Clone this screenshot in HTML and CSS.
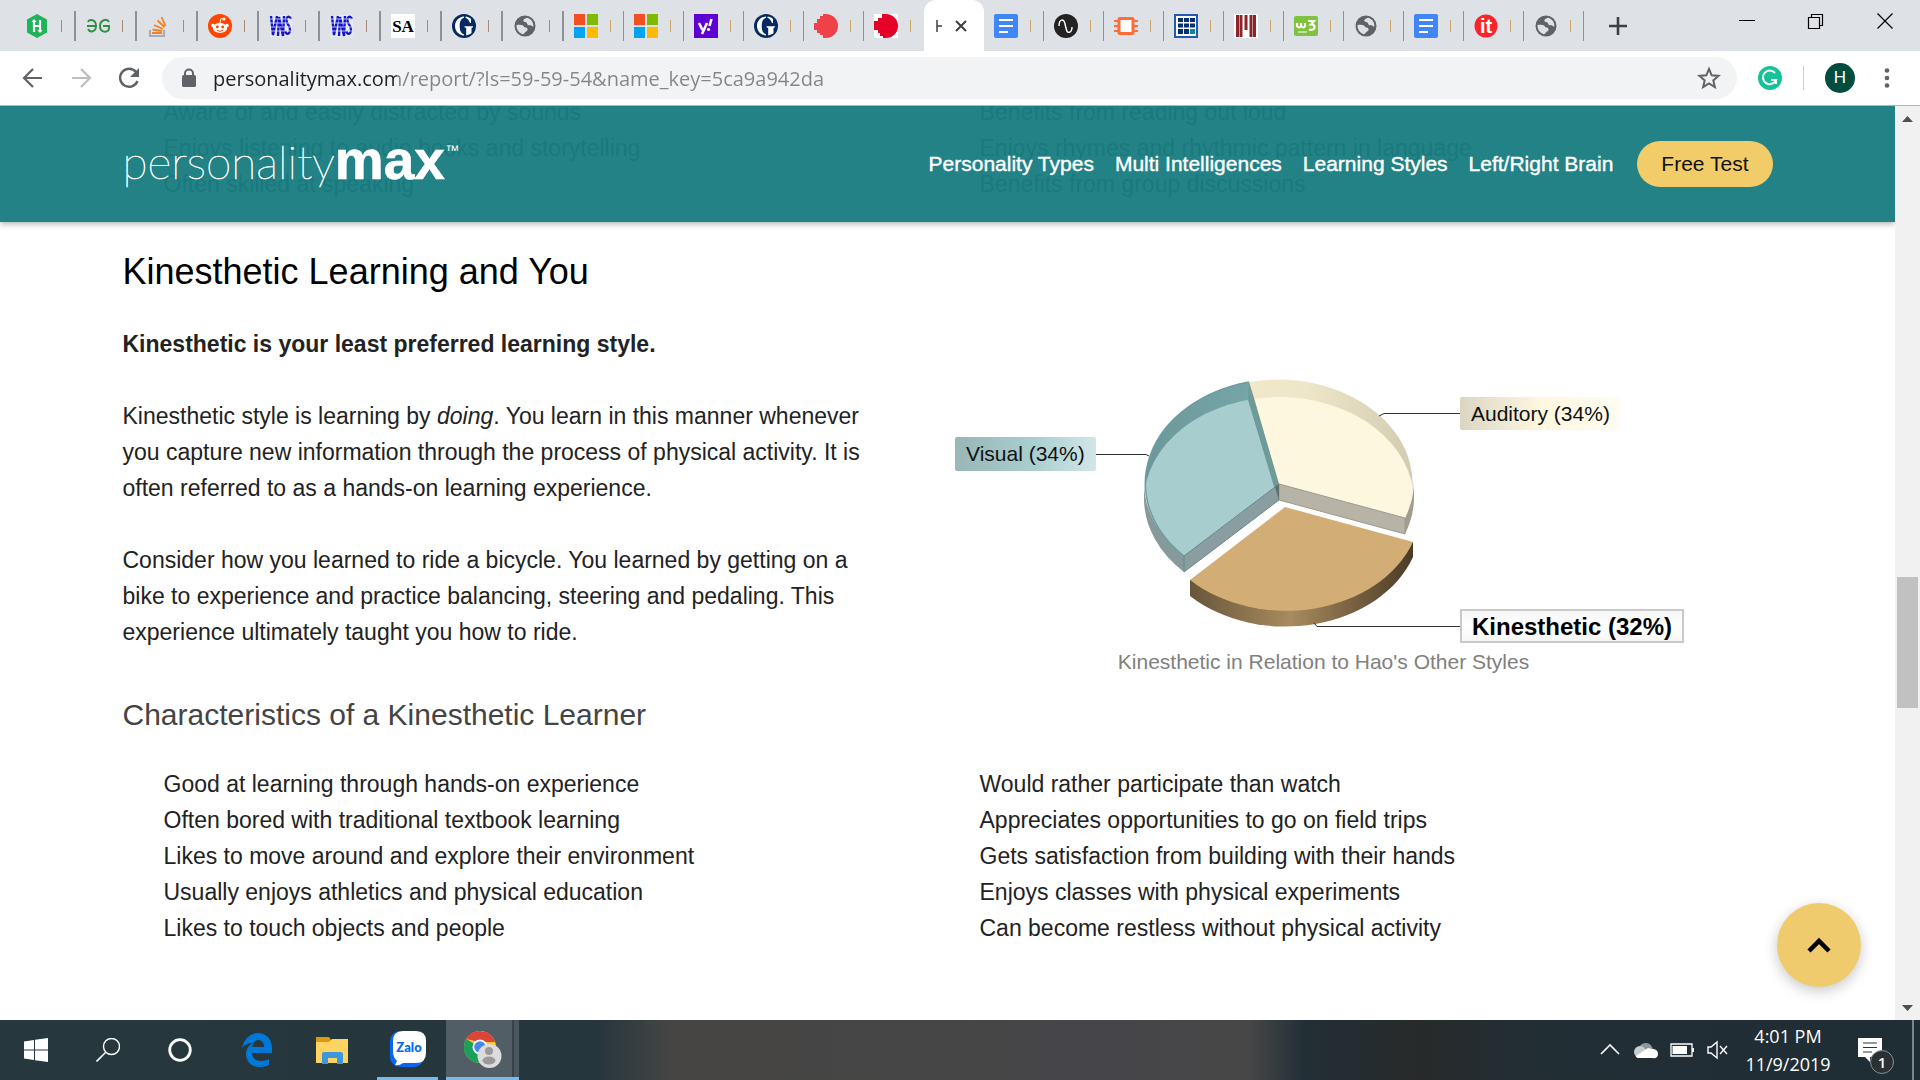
FILE: index.html
```html
<!DOCTYPE html>
<html lang="en">
<head>
<meta charset="utf-8">
<title>Kinesthetic Learning and You</title>
<link rel="stylesheet" href="styles.css">
</head>
<body>
<svg class="defs" aria-hidden="true">
  <symbol id="globe" viewBox="0 0 24 24"><circle cx="12" cy="12" r="10.500" fill="#5f6368"/><path fill="#dee1e6" d="M3.500 11c2.500-.5 5-.5 6.500.5 1 .7 1 2 2.500 2 1.500.3 2.300 1.200 2 2.500-.5 1.700-2.500 1.500-3 3-.3 1-1.500 1.500-3 .8C5 18 3.300 15 3.500 11z"/><path fill="#dee1e6" d="M14 3.800c-1.500.7-3.500 1-3.700 2.700-.1 1.300 1.500 1.500 2.700 1.800 1.200.4.800 2 2 2.700 1.300.7 2.500-.3 3.500.7.700.8 1.200 1 1.900.5C20.500 8 18 5 14 3.800z"/></symbol>
  <symbol id="ms" viewBox="0 0 24 24"><path fill="#f25022" d="M0 0h11v11H0z"/><path fill="#7fba00" d="M13 0h11v11H13z"/><path fill="#00a4ef" d="M0 13h11v11H0z"/><path fill="#ffb900" d="M13 13h11v11H13z"/></symbol>
  <symbol id="vns" viewBox="0 0 24 24"><path fill="#e8eaf0" d="M1 1h22v22H1z"/><path fill="none" stroke="#1414c8" stroke-width="2.400" d="M2 2l2 19L8 2M9 22l1-19 4 19 1-20M22 5c-2-4-5-2-4.500 2s4 5 3.500 9c-.5 5-4 5-4.500 1"/><path stroke="#e8eaf0" stroke-width=".8" d="M1 5h22M1 9h22M1 13h22M1 17h22"/></symbol>
  <symbol id="guard" viewBox="0 0 24 24"><circle cx="12" cy="12" r="12" fill="#052962"/><path fill="#fff" d="M12 2.500C6.500 3 3 7 3 12s3.500 9 9 9.500v-1.200C9 19.500 7.700 16.500 7.700 12S9 4.500 12 3.700zM13.500 2.500c2 .2 4 1 5.500 2.200V9h-1c-1-2.700-2.500-4.700-4.500-5.300zM12.500 12.300H21v1l-1.500.7v5c-1.500 1.300-3.500 2.200-5.300 2.400V14l-1.700-.7z"/></symbol>
  <symbol id="docs" viewBox="0 0 24 24"><rect width="24" height="24" rx="2" fill="#4285f4"/><path stroke="#fff" stroke-width="2.200" d="M5 6h14M5 12h14M5 18h9"/></symbol>
</svg>

<header class="tabstrip">
  <div class="tabs">
    <button class="tab wide" aria-label="H"><svg viewBox="0 0 24 24"><path fill="#1fb35a" d="M12 0l10 5.500v13L12 24 2 18.500v-13z"/><path stroke="#fff" stroke-width="2.200" fill="none" d="M9 6v12M15 6v12M9 12h6"/><path fill="#fff" d="M6.500 8h5L9 5zM12.500 16h5L15 19z"/></svg><i></i></button>
    <button class="tab wide" aria-label="GeeksforGeeks"><svg viewBox="0 0 24 24"><path fill="none" stroke="#2f8d46" stroke-width="1.900" d="M1 12h10M2 8c1-3 8-3 8 4 0 6-6 7-8 3M23 8c-2-4-9-2-9 4 0 7 8 7 9 3v-3h-6"/></svg><i></i></button>
    <button class="tab wide" aria-label="Stack Overflow"><svg viewBox="0 0 24 24"><path fill="none" stroke="#a9adb2" stroke-width="2.200" d="M3 16v6h14v-6"/><path fill="none" stroke="#f48024" stroke-width="1.800" d="M5 19h10M5.500 15.500l9.500 1.500M7 11l9 4M10.500 6.500l7 6.500M14.500 3l4 9"/></svg><i></i></button>
    <button class="tab wide" aria-label="Reddit"><svg viewBox="0 0 24 24"><circle cx="12" cy="12" r="12" fill="#ff4500"/><ellipse cx="12" cy="14" rx="7.200" ry="5" fill="#fff"/><circle cx="5" cy="11.500" r="1.800" fill="#fff"/><circle cx="19" cy="11.500" r="1.800" fill="#fff"/><circle cx="16" cy="5" r="1.500" fill="#fff"/><path d="M12 9l1-4.500 3 .7" fill="none" stroke="#fff"/><path d="M9 16.300q3 2 6 0" fill="none" stroke="#ff4500"/><circle cx="9.300" cy="13" r="1.400" fill="#ff4500"/><circle cx="14.700" cy="13" r="1.400" fill="#ff4500"/></svg><i></i></button>
    <button class="tab wide" aria-label="VNS"><svg><use href="#vns"/></svg><i></i></button>
    <button class="tab wide" aria-label="VNS"><svg><use href="#vns"/></svg><i></i></button>
    <button class="tab wide" aria-label="SA"><svg viewBox="0 0 24 24"><path fill="#fff" d="M0 0h24v24H0z"/><text x="12" y="18" text-anchor="middle" class="fav-serif">SA</text></svg><i></i></button>
    <button class="tab wide" aria-label="The Guardian"><svg><use href="#guard"/></svg><i></i></button>
    <button class="tab wide" aria-label="Page"><svg><use href="#globe"/></svg><i></i></button>
    <button class="tab" aria-label="Microsoft"><svg><use href="#ms"/></svg><i></i></button>
    <button class="tab" aria-label="Microsoft"><svg><use href="#ms"/></svg><i></i></button>
    <button class="tab" aria-label="Yahoo"><svg viewBox="0 0 24 24"><path fill="#5f01d1" d="M0 0h24v24H0z"/><path fill="none" stroke="#fff" stroke-width="2.600" d="M5 9l3.500 7M13 9L8 20M17.500 5l-2 7"/><circle cx="14.500" cy="15.500" r="1.600" fill="#fff"/></svg><i></i></button>
    <button class="tab" aria-label="The Guardian"><svg><use href="#guard"/></svg><i></i></button>
    <button class="tab" aria-label="Page"><svg viewBox="0 0 24 24"><path fill="#f04048" d="M12 0a12 12 0 0 1 0 24H9v-3H6v-2H3v-3H0V9h3V5h3V2h3V0z"/></svg><i></i></button>
    <button class="tab last" aria-label="Page"><svg viewBox="0 0 24 24"><path fill="#fff" d="M0 0h24v24H0z"/><path fill="#e60028" d="M12 0a12 12 0 0 1 0 24H9v-2H6v-3H4v-3H0V7h4V4h4V0z"/></svg><i></i></button>
    <button class="tab active" aria-label="Close current tab"><svg viewBox="0 0 36 24"><path fill="none" stroke="#3c4043" stroke-width="1.500" d="M1 6v12M1 12h5"/><path fill="none" stroke="#3c4043" stroke-width="2" d="M20 7l10 10M30 7L20 17"/></svg></button>
    <button class="tab" aria-label="Docs"><svg><use href="#docs"/></svg><i></i></button>
    <button class="tab" aria-label="Wave"><svg viewBox="0 0 24 24"><circle cx="12" cy="12" r="12" fill="#222"/><path fill="none" stroke="#fff" stroke-width="1.400" d="M5 12c0-7 5-8 6-2l1.500 6c1 4 5.500 3 5.500-3"/></svg><i></i></button>
    <button class="tab" aria-label="Circuit"><svg viewBox="0 0 24 24"><path fill="none" stroke="#ff6c37" stroke-width="2" d="M0 7h4M0 12h4M0 17h4M20 7h4M20 12h4M20 17h4"/><rect x="5" y="4.500" width="14" height="15" rx="1" fill="#fff" stroke="#ff6c37" stroke-width="3"/></svg><i></i></button>
    <button class="tab" aria-label="Grid"><svg viewBox="0 0 24 24"><path fill="#fff" stroke="#2458b3" stroke-width="2" d="M1 1h22v22H1z"/><path fill="#003070" d="M4 4h5v4H4zM10 4h5v4h-5zM16 4h5v4h-5zM4 9.500h5v4H4zM10 9.500h5v4h-5zM16 9.500h5v4h-5zM4 15h5v5H4zM10 15h5v5h-5z"/><path fill="#008e8e" d="M16 15h5v5h-5z"/></svg><i></i></button>
    <button class="tab" aria-label="M"><svg viewBox="0 0 24 24"><path fill="#fff" d="M0 0h24v24H0z"/><path stroke="#8b2529" stroke-width="3" d="M3.500 1v22M7 1v22M12 1v15M17 1v22M20.500 1v22"/></svg><i></i></button>
    <button class="tab" aria-label="W3Schools"><svg viewBox="0 0 24 24"><rect y="2" width="24" height="20" rx="2" fill="#80c23e"/><path fill="none" stroke="#fff" stroke-width="2.200" d="M3 9v3q2 3 4 0V9v3q3 3 4 0V9M14 7h6l-3 3.500c6 0 4 7-2 5"/><path stroke="#fff" d="M4 18h9"/></svg><i></i></button>
    <button class="tab" aria-label="Page"><svg><use href="#globe"/></svg><i></i></button>
    <button class="tab" aria-label="Docs"><svg><use href="#docs"/></svg><i></i></button>
    <button class="tab" aria-label="it"><svg viewBox="0 0 24 24"><circle cx="12" cy="12" r="11.500" fill="#f8262a"/><text x="12" y="19" text-anchor="middle" class="fav-it">it</text></svg><i></i></button>
    <button class="tab" aria-label="Page"><svg><use href="#globe"/></svg><i></i></button>
  </div>
  <button class="newtab" aria-label="New tab"><svg viewBox="0 0 24 24"><path stroke="#3c4043" stroke-width="2.600" d="M12 3v18M3 12h18"/></svg></button>
  <div class="wincontrols">
    <button aria-label="Minimize"><svg viewBox="0 0 24 24"><path stroke="#000" d="M4 11.500h16"/></svg></button>
    <button aria-label="Restore"><svg viewBox="0 0 24 24"><path fill="none" stroke="#000" stroke-width="1.200" d="M4.500 8.500h11v11h-11zM7.500 8V5.500h11v11H16"/></svg></button>
    <button aria-label="Close"><svg viewBox="0 0 24 24"><path stroke="#000" stroke-width="1.200" d="M4.500 4.500l15 15M19.500 4.500l-15 15"/></svg></button>
  </div>
</header>

<div class="toolbar">
  <div class="history">
    <button aria-label="Back"><svg viewBox="0 0 24 24"><path fill="none" stroke="#5f6368" stroke-width="2.200" d="M21 12H4M12 3l-9 9 9 9"/></svg></button>
    <button aria-label="Forward"><svg viewBox="0 0 24 24"><path fill="none" stroke="#bcbec1" stroke-width="2.200" d="M3 12h17M12 3l9 9-9 9"/></svg></button>
    <button aria-label="Reload"><svg viewBox="0 0 24 24"><path fill="none" stroke="#5f6368" stroke-width="2.400" d="M19 6A9 9 0 1 0 20.500 15"/><path fill="#5f6368" d="M22 2v9h-9z"/></svg></button>
  </div>
  <div class="omnibox">
    <svg viewBox="0 0 16 20"><path fill="none" stroke="#5f6368" stroke-width="2" d="M4 9V5.500a4 4 0 0 1 8 0V9"/><rect x="1" y="7" width="14" height="12" rx="1.500" fill="#5f6368"/></svg>
    <input class="url" type="text" aria-label="Address" value="personalitymax.com/report/?ls=59-59-54&amp;name_key=5ca9a942da">
    <button aria-label="Bookmark"><svg viewBox="0 0 24 24"><path fill="none" stroke="#5f6368" stroke-width="2" d="M12 3l2.700 6.300 6.800.6-5.200 4.500 1.600 6.700-5.900-3.600-5.900 3.600 1.600-6.700L2.500 9.900l6.800-.6z"/></svg></button>
  </div>
  <button aria-label="Grammarly"><svg viewBox="0 0 24 24"><circle cx="12" cy="12" r="12" fill="#15c39a"/><path fill="none" stroke="#fff" stroke-width="2" d="M17 7a6.800 6.800 0 1 0 1 7h-5M18 13.500V18"/></svg></button>
  <span class="divider"></span>
  <button class="avatar">H</button>
  <button class="menu" aria-label="Menu"><svg viewBox="0 0 12 24"><g fill="#5f6368"><circle cx="6" cy="4.500" r="2.300"/><circle cx="6" cy="12" r="2.300"/><circle cx="6" cy="19.500" r="2.300"/></g></svg></button>
</div>

<div class="viewport">
  <div class="page">
    <nav class="sitebar" aria-label="Site">
      <div class="container sitebar-row">
        <a href="#" class="logo">personality<b>max</b><sup>™</sup></a>
        <div class="links">
          <a href="#">Personality Types</a>
          <a href="#">Multi Intelligences</a>
          <a href="#">Learning Styles</a>
          <a href="#">Left/Right Brain</a>
          <button class="cta">Free Test</button>
        </div>
      </div>
    </nav>

    <main class="container">
      <div class="columns previous">
        <ul>
          <li>Aware of and easily distracted by sounds</li>
          <li>Enjoys listening to audio books and storytelling</li>
          <li>Often skilled at speaking</li>
        </ul>
        <ul>
          <li>Benefits from reading out loud</li>
          <li>Enjoys rhymes and rhythmic pattern in language</li>
          <li>Benefits from group discussions</li>
        </ul>
      </div>
      <h2>Kinesthetic Learning and You</h2>
      <div class="columns">
        <div class="copy">
          <p><strong>Kinesthetic is your least preferred learning style.</strong></p>
          <p>Kinesthetic style is learning by <em>doing</em>. You learn in this manner whenever you capture new information through the process of physical activity. It is often referred to as a hands-on learning experience.</p>
          <p>Consider how you learned to ride a bicycle. You learned by getting on a bike to experience and practice balancing, steering and pedaling. This experience ultimately taught you how to ride.</p>
        </div>
        <figure>
          <svg class="pie" viewBox="939 326 770 318" role="img" aria-label="Pie chart of learning styles">
            <defs>
              <linearGradient id="gk"><stop offset="0" stop-color="#68563a"/><stop offset=".45" stop-color="#a88b5e"/><stop offset=".62" stop-color="#8b714c"/><stop offset="1" stop-color="#4a3b26"/></linearGradient>
              <linearGradient id="gv"><stop offset="0" stop-color="#9ab6b6"/><stop offset=".55" stop-color="#a8cece"/><stop offset="1" stop-color="#d3e6e7"/></linearGradient>
              <linearGradient id="ga"><stop offset="0" stop-color="#dbd6c4"/><stop offset=".5" stop-color="#fef7df"/><stop offset="1" stop-color="#fffcf2"/></linearGradient>
              <linearGradient id="ca"><stop offset="0" stop-color="#f1e8ca"/><stop offset=".35" stop-color="#eee6c8"/><stop offset="1" stop-color="#d2ccb0"/></linearGradient>
              <linearGradient id="cv"><stop offset="0" stop-color="#6c989b"/><stop offset="1" stop-color="#78a9ac"/></linearGradient>
              <linearGradient id="gb" x2="0" y2="1"><stop offset="0" stop-color="#f6f6f6"/><stop offset=".5" stop-color="#fff"/><stop offset="1" stop-color="#f6f6f6"/></linearGradient>
              <clipPath id="lower"><ellipse cx="1279" cy="501" rx="135" ry="104"/></clipPath>
            </defs>
            <path fill="#869a9a" d="M1144 480A135 104 0 0 0 1184 556V572A135 104 0 0 1 1144 500z"/>
            <path fill="#a09d90" d="M1414 480A135 104 0 0 1 1405 518V534A135 104 0 0 0 1414 500z"/>
            <path fill="url(#cv)" d="M1279 484L1249 382A135 104 0 0 0 1184 556z"/>
            <path fill="url(#ca)" d="M1279 484L1249 382A135 104 0 0 1 1405 518z"/>
            <g clip-path="url(#lower)">
              <path fill="#a8cdce" d="M1279 484L1249 382A135 104 0 0 0 1184 556z"/>
              <path fill="#fef7df" d="M1279 484L1249 382A135 104 0 0 1 1405 518z"/>
            </g>
            <path fill="none" stroke="#6f9c9d" stroke-width="1.500" d="M1249 382A135 104 0 0 0 1184 556"/>
            <path fill="#709a98" d="M1249 382L1254 398 1279 484 1275 490 1248 400z"/>
            <path fill="#8a9da0" stroke="#6a8888" stroke-width="1" d="M1184 556L1279 484V500L1184 572z"/>
            <path fill="#b7b4a7" stroke="#9d9a8c" stroke-width="1" d="M1279 484L1405 518V534L1279 500z"/>
            <path fill="#5c706f" d="M1275 487L1279 484V500z"/>
            <path fill="url(#gk)" d="M1190 580V596A135 104 0 0 0 1413 557V542z"/>
            <path fill="#d2ae76" d="M1285 507L1413 542A135 104 0 0 1 1190 580z"/>
            <g fill="none" stroke="#333" stroke-width="1"><path d="M1096 454.500H1146L1149 456"/><path d="M1379 416L1384 413.500H1460"/><path d="M1314 623L1317 626.500H1460"/></g>
            <rect x="955" y="437" width="141" height="34" rx="2" fill="url(#gv)"/>
            <rect x="1460" y="397" width="160" height="33" rx="2" fill="url(#ga)"/>
            <rect x="1461" y="610" width="222" height="32" fill="url(#gb)" stroke="#c9c9c9" stroke-width="2"/>
            <g class="pie-label"><text x="966" y="461">Visual (34%)</text><text x="1471" y="421">Auditory (34%)</text></g>
            <text class="pie-label-big" x="1472" y="635">Kinesthetic (32%)</text>
          </svg>
          <figcaption>Kinesthetic in Relation to Hao's Other Styles</figcaption>
        </figure>
      </div>
      <h3>Characteristics of a Kinesthetic Learner</h3>
      <div class="columns">
        <ul>
          <li>Good at learning through hands-on experience</li>
          <li>Often bored with traditional textbook learning</li>
          <li>Likes to move around and explore their environment</li>
          <li>Usually enjoys athletics and physical education</li>
          <li>Likes to touch objects and people</li>
        </ul>
        <ul>
          <li>Would rather participate than watch</li>
          <li>Appreciates opportunities to go on field trips</li>
          <li>Gets satisfaction from building with their hands</li>
          <li>Enjoys classes with physical experiments</li>
          <li>Can become restless without physical activity</li>
        </ul>
      </div>
    </main>
    <button class="totop" aria-label="Back to top"><svg viewBox="0 0 24 24"><path fill="none" stroke="#000" stroke-width="4.500" d="M2 18l10-10 10 10"/></svg></button>
  </div>
  <div class="scrollbar">
    <svg viewBox="0 0 25 25"><path fill="#505050" d="M7 16h11l-5.500-6z"/></svg>
    <div class="track-above"></div>
    <div class="thumb"></div>
    <div class="track-below"></div>
    <svg viewBox="0 0 25 25"><path fill="#505050" d="M7 10h11l-5.500 6z"/></svg>
  </div>
</div>

<footer class="taskbar">
  <button aria-label="Start"><svg viewBox="0 0 24 24"><path fill="#fff" d="M0 3.500L10 2v9.500H0zM11 1.800L24 0v11.500H11zM0 12.500h10V22L0 20.500zM11 12.500h13V24l-13-1.800z"/></svg></button>
  <button aria-label="Search"><svg viewBox="0 0 24 24"><circle cx="15.500" cy="8.500" r="8" fill="none" stroke="#fff" stroke-width="1.400"/><path stroke="#fff" stroke-width="1.600" d="M9.500 14.500L.5 23.500"/></svg></button>
  <button aria-label="Cortana"><svg viewBox="0 0 24 24"><circle cx="12" cy="12" r="10.300" fill="none" stroke="#fff" stroke-width="2.800"/></svg></button>
  <button class="app edge" aria-label="Edge"><svg viewBox="0 0 32 34"><path fill="#0078d7" d="M1 15C3 6 9 0 17 0c9 0 14 7 14 15v5H11c0 5 4 8 9 8 4 0 6-1 8-2v6c-3 1.500-6 2-10 2C10 34 5 28 5 21c0-5 3-9 7-11-5 0-9 2-11 5zm10-1h12c0-4-2-7-6-7-3 0-5 3-6 7z"/></svg></button>
  <button class="app" aria-label="File Explorer"><svg viewBox="0 0 32 34"><path fill="#dd9a0e" d="M0 4h13l2 3v4H0z"/><path fill="#fed460" d="M0 9l13 0 3-3h16v24H0z"/><path fill="#3e97de" d="M6 31V21q0-2 2-2h17q2 0 2 2v10h-6v-6h-9v6z"/></svg></button>
  <button class="app zalo" aria-label="Zalo"><svg viewBox="0 0 36 36"><rect width="34" height="36" rx="10" fill="#0866f5"/><path fill="#fff" d="M13 0h13q10 0 10 10v12q0 10-10 10H13q-4 3-8 2l2-4q-4-4-4-9V10Q3 0 13 0z"/><text x="19" y="21" text-anchor="middle" class="zalo-text">Zalo</text></svg></button>
  <button class="app chrome" aria-label="Chrome"><svg viewBox="0 0 38 38"><circle cx="16" cy="17" r="16" fill="#fcc934"/><path fill="#1aa05a" d="M16 17L2.100 9a16 16 0 0 0 13 24z"/><path fill="#db4437" d="M2.100 9a16 16 0 0 1 29 3H16z"/><circle cx="16" cy="17" r="7.500" fill="#fff"/><circle cx="16" cy="17" r="5.800" fill="#4a85ee"/><circle cx="25.500" cy="26" r="12" fill="#dcdcdc"/><circle cx="25" cy="21" r="4" fill="#9a9a9a"/><ellipse cx="25" cy="30.500" rx="6.500" ry="4" fill="#9a9a9a"/></svg></button>
  <div class="tray">
    <svg viewBox="0 0 24 24"><path fill="none" stroke="#fff" stroke-width="1.600" d="M3 16l9-9 9 9"/></svg>
    <svg viewBox="0 0 24 24"><path fill="#8d979b" d="M5 10a7 7 0 0 1 13-1l2 4H4z"/><circle cx="6" cy="14" r="6" fill="#c8cdcf"/><path fill="#fff" d="M2 18l12-8 4 1q6 0 6 5t-6 4H5q-3 0-3-2z"/></svg>
    <svg viewBox="0 0 24 24"><path fill="none" stroke="#fff" stroke-width="1.300" d="M1 6h21v12H1z"/><path fill="#fff" d="M2.500 8H17v8H2.500zM22 10h2v4h-2z"/></svg>
    <svg viewBox="0 0 24 24"><path fill="none" stroke="#fff" stroke-width="1.400" d="M2 9h3l6-5v16l-6-5H2zM14 8l7 8M21 8l-7 8"/></svg>
    <div class="clock"><span>4:01 PM</span><span>11/9/2019</span></div>
    <button class="notify" aria-label="Notifications"><svg viewBox="0 0 24 24"><path fill="#fff" d="M0 0h24v19H12v5l-5-5H0z"/><path stroke="#25363d" stroke-width="1.200" d="M5 5h14M5 9.500h14M5 14h9"/></svg><span class="count">1</span></button>
    <span class="desktop-edge"></span>
  </div>
</footer>
</body>
</html>
```
FILE: styles.css
```css
* { box-sizing: border-box; }
body {
  margin: 0;
  height: 100vh;
  display: flex;
  flex-direction: column;
  overflow: hidden;
  background: #fff;
  color: #222;
  font-family: "Liberation Sans", Arial, sans-serif;
}
button { border: 0; padding: 0; background: none; font: inherit; color: inherit; }
a { color: inherit; text-decoration: none; }
ul, h2, h3, p, figure { margin: 0; padding: 0; }
ul { list-style: none; }
svg { display: block; }
.defs { display: none; }

/* Tab strip */
.tabstrip { display: flex; flex: none; height: 51px; padding-left: 15px; background: #dee1e6; }
.tabs { display: flex; }
.tab { position: relative; display: flex; align-items: center; gap: 12px; width: 60px; padding-left: 10px; }
.tab.wide { width: 61px; }
.tab svg { width: 24px; height: 24px; flex: none; }
.tab i { width: 1px; height: 12px; background: #c9a36a; }
.tab::after { content: ""; width: 2px; height: 30px; margin-left: auto; background: #8e9196; }
.tab.wide i { background: #a58b78; }
.tab.active { background: #fff; border-radius: 12px 12px 0 0; padding-left: 12px; }
.tab.active svg { width: 36px; }
.tab.active::after, .tab.last::after { display: none; }
.newtab { width: 24px; margin-left: 22px; }
.newtab svg { width: 24px; height: 24px; }
.wincontrols { display: flex; align-items: center; gap: 45px; height: 42px; margin-left: auto; padding-right: 23px; }
.wincontrols svg { width: 24px; height: 24px; }
.fav-serif { font: bold 17px "Liberation Serif", serif; }
.fav-it { font: bold 20px "Liberation Sans", sans-serif; fill: #fff; }

/* Toolbar */
.toolbar { display: flex; flex: none; align-items: center; gap: 21px; height: 55px; padding: 0 27px 0 21px; border-bottom: 1px solid #b6b4b6; }
.toolbar svg { width: 24px; height: 24px; }
.history { display: flex; gap: 24px; }
.omnibox { display: flex; align-items: center; flex: 1; gap: 16px; height: 42px; padding: 0 16px 0 19px; border-radius: 21px; background: #f1f3f4; }
.omnibox > svg { width: 16px; height: 20px; }
.url {
  flex: 1;
  min-width: 0;
  border: 0;
  padding: 0;
  outline: 0;
  font: 20px "Open Sans", "Noto Sans", sans-serif;
  background: linear-gradient(90deg, #202124 184px, #80868b 184px);
  -webkit-background-clip: text;
  background-clip: text;
  color: transparent;
}
.divider { width: 1px; height: 24px; background: #ccc; }
.avatar { width: 30px; height: 30px; border-radius: 50%; background: #004d40; color: #fff; font-size: 17px; }
.menu { margin-left: 5px; }
.menu svg { width: 12px; }

/* Page viewport */
.viewport { display: flex; flex: 1; min-height: 0; }
.page { position: relative; flex: 1; min-width: 0; overflow: hidden; }
.container { max-width: 1650px; margin: 0 auto; }
.sitebar {
  position: absolute;
  inset: 0 0 auto 0;
  z-index: 1;
  background: rgba(25, 125, 129, 0.96);
  box-shadow: 0 2px 6px rgba(0, 0, 0, 0.3);
}
.sitebar-row { display: flex; align-items: center; justify-content: space-between; height: 116px; }
.logo { padding-bottom: 6px; color: #fff; font: 100 46px/60px Lato, sans-serif; -webkit-text-stroke: 0.6px #fff; }
.logo b { font: bold 55px/60px "Liberation Sans", sans-serif; }
.logo sup { font: 14px/14px "Liberation Sans", sans-serif; vertical-align: 24px; -webkit-text-stroke: 0; }
.links { display: flex; align-items: center; gap: 21px; color: #fff; font-size: 21px; }
.links a { -webkit-text-stroke: 0.4px #fff; }
.cta { height: 46px; padding: 0 24px; margin-left: 3px; border-radius: 23px; background: #f1cc68; color: #111; }

.columns { display: grid; grid-template-columns: 1fr 1fr; padding-right: 18px; font-size: 23px; line-height: 36px; }
.columns ul { padding-left: 41px; }
.previous { margin-top: -12px; }
h2 { margin: 48px 0 32px; color: #000; font-size: 36px; font-weight: 400; line-height: 44px; }
h3 { margin: 17px 0 33px; color: #444; font-size: 30px; font-weight: 400; line-height: 36px; }
.copy { display: flex; flex-direction: column; gap: 36px; padding-right: 72px; }
.pie { width: 100%; max-width: 770px; height: 318px; }
.pie-label { font: 21px "Liberation Sans", sans-serif; fill: #111; }
.pie-label-big { font: bold 24px "Liberation Sans", sans-serif; fill: #000; }
figcaption { max-width: 770px; color: #808080; font-size: 21px; text-align: center; }

.totop {
  position: absolute;
  right: 34px;
  bottom: 33px;
  display: grid;
  place-items: center;
  width: 84px;
  height: 84px;
  border-radius: 50%;
  background: #efcb6d;
  box-shadow: 0 4px 14px rgba(0, 0, 0, 0.22);
}
.totop svg { width: 24px; height: 24px; }

.scrollbar { display: flex; flex-direction: column; align-items: center; width: 25px; background: #f1f1f1; }
.scrollbar svg { width: 25px; height: 25px; flex: none; }
.thumb { width: 21px; height: 131px; background: #c1c1c1; }
.track-above { flex: 446; }
.track-below { flex: 287; }

/* Taskbar */
.taskbar {
  display: flex;
  flex: none;
  height: 60px;
  background: linear-gradient(90deg, #26373e 0, #25363d 31%, #464544 35%, #464646 51%, #46454a 56%, #474747 65%, #222f36 68%, #282a2a 74%, #222e34 79%, #1f2d35 100%);
  color: #fff;
}
.taskbar button { display: grid; place-items: center; width: 72px; }
.taskbar button svg { width: 24px; height: 24px; }
.taskbar .app { width: 75px; }
.taskbar .app svg { width: 32px; height: 34px; }
.taskbar .edge { margin-left: 3px; }
.taskbar .zalo { width: 61px; margin-left: 8px; border-bottom: 3px solid #76b9ed; }
.taskbar .zalo svg { width: 36px; height: 36px; }
.taskbar .chrome { width: 73px; margin-left: 8px; border-bottom: 3px solid #76b9ed; background: linear-gradient(90deg, #525e65 66px, #364349 66px, #364349 68px, #49565d 68px); }
.taskbar .chrome svg { width: 38px; height: 38px; }
.zalo-text { font: 900 13px Lato, sans-serif; fill: #0866f5; }
.tray { display: flex; align-items: center; gap: 12px; margin-left: auto; }
.tray svg { width: 24px; height: 24px; }
.clock { display: flex; flex-direction: column; width: 92px; text-align: center; font: 18px/28px "Open Sans", sans-serif; }
.taskbar .notify { position: relative; width: 24px; margin-left: 12px; }
.count {
  position: absolute;
  right: -12px;
  bottom: -12px;
  width: 24px;
  height: 24px;
  border: 1px solid #8a8f92;
  border-radius: 50%;
  background: #2b3033;
  font: 600 15px/22px "Open Sans", sans-serif;
  text-align: center;
}
.desktop-edge { width: 2px; height: 60px; margin: 0 6px 0 18px; background: #7d868a; }
```
